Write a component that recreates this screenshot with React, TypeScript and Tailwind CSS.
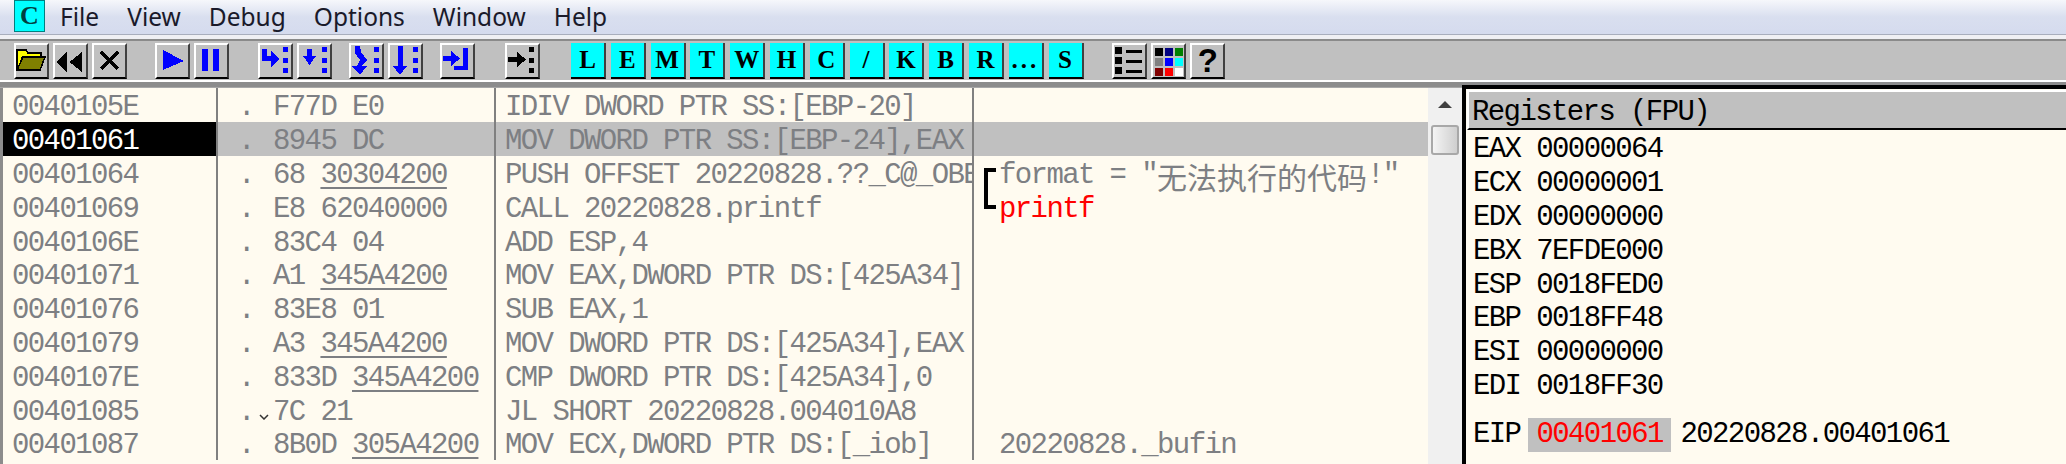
import React from "react";

const MONO = "font-['Liberation_Mono',monospace] text-[29px] tracking-[-1.6px] whitespace-pre leading-[24px]";

type Row = {
  addr: string;
  op: string;
  arg?: string;
  mark?: boolean;
  cmd: string;
  clipped?: boolean;
  comment?: React.ReactNode;
  active?: boolean;
};

const rows: Row[] = [
  { addr: "0040105E", op: "F77D E0", cmd: "IDIV DWORD PTR SS:[EBP-20]" },
  { addr: "00401061", op: "8945 DC", cmd: "MOV DWORD PTR SS:[EBP-24],EAX", active: true },
  {
    addr: "00401064",
    op: "68 ",
    arg: "30304200",
    cmd: "PUSH OFFSET 20220828.??_C@_OBE@",
    clipped: true,
    comment: (
      <>
        format = "
        <span className="font-['Noto_Sans_CJK_SC',sans-serif] text-[30px] tracking-normal">无法执行的代码</span>
        !"
      </>
    ),
  },
  {
    addr: "00401069",
    op: "E8 62040000",
    cmd: "CALL 20220828.printf",
    comment: <span className="text-[#ff0000]">printf</span>,
  },
  { addr: "0040106E", op: "83C4 04", cmd: "ADD ESP,4" },
  { addr: "00401071", op: "A1 ", arg: "345A4200", cmd: "MOV EAX,DWORD PTR DS:[425A34]" },
  { addr: "00401076", op: "83E8 01", cmd: "SUB EAX,1" },
  { addr: "00401079", op: "A3 ", arg: "345A4200", cmd: "MOV DWORD PTR DS:[425A34],EAX" },
  { addr: "0040107E", op: "833D ", arg: "345A4200", cmd: "CMP DWORD PTR DS:[425A34],0" },
  { addr: "00401085", op: "7C 21", mark: true, cmd: "JL SHORT 20220828.004010A8" },
  {
    addr: "00401087",
    op: "8B0D ",
    arg: "305A4200",
    cmd: "MOV ECX,DWORD PTR DS:[_iob]",
    comment: "20220828._bufin",
  },
];

const registers = [
  ["EAX", "00000064"],
  ["ECX", "00000001"],
  ["EDX", "00000000"],
  ["EBX", "7EFDE000"],
  ["ESP", "0018FED0"],
  ["EBP", "0018FF48"],
  ["ESI", "00000000"],
  ["EDI", "0018FF30"],
];

const BLUE = "#0000ff";

const Dots = ({ fill = BLUE, x = 24.5 }: { fill?: string; x?: number }) => (
  <>
    <rect x={x} y={4} width={5} height={5} fill={fill} />
    <rect x={x} y={14.5} width={5} height={5} fill={fill} />
    <rect x={x} y={25} width={5} height={5} fill={fill} />
  </>
);

const icons: Record<string, React.ReactNode> = {
  open: (
    <>
      <path d="M3 7h9l2 3h13v5H8L4 26H3z" fill="#ffff00" stroke="#000" strokeWidth="1.5" />
      <path d="M9 14h22l-5 13H3z" fill="#808000" stroke="#000" strokeWidth="1.5" />
    </>
  ),
  rewind: <path d="M3.5 19 14 9v20zM16.5 19 29 9v20z" fill="#000" />,
  close: <path d="M9 9 26 26M26 9 9 26" stroke="#000" strokeWidth="4" fill="none" />,
  play: <path d="M8 7 29 18 8 27z" fill={BLUE} />,
  pause: <path d="M8 6h6v22H8zM19 6h6v22h-6z" fill={BLUE} />,
  traceIn: (
    <>
      <path d="M4 6h5v7h4V8l8 8-8 8v-6H4z" fill={BLUE} />
      <Dots />
    </>
  ),
  stepIn: (
    <>
      <path d="M10 6h5v7h4l-6.500 9L6 13h4z" fill={BLUE} />
      <Dots />
    </>
  ),
  traceOver: (
    <>
      <path d="M6 3h5l1 6 6 8-5 6h5l-7 9-8-9h5l3-6-5-7z" fill={BLUE} />
      <Dots />
    </>
  ),
  stepOver: (
    <>
      <path d="M9.500 3h5v20H19l-7 9-7-9h4.500z" fill={BLUE} />
      <Dots />
    </>
  ),
  tillRet: (
    <path d="M3 13h8V8l9 7.500-9 7.500v-5H3zM23 5h5v22H14v-4h9z" fill={BLUE} />
  ),
  goTo: (
    <>
      <path d="M3 14h9V9l9 7.500-9 7.500v-5H3z" fill="#000" />
      <Dots fill="#000" x={23.5} />
    </>
  ),
  list: (
    <>
      <path d="M3 4h7v7H3zM3 14h7v7H3zM3 24h7v7H3z" fill="#000" />
      <path d="M14 6.500h16v3H14zM14 16.500h16v3H14zM14 26.500h16v3H14z" fill="#000" />
    </>
  ),
  colors: (
    <>
      {["#000000", "#000080", "#008000", "#808080", "#0000ff", "#00ffff", "#800000", "#ff0000", "#ffffff"].map(
        (c, i) => (
          <rect key={c} x={3.500 + (i % 3) * 10} y={4.500 + Math.floor(i / 3) * 10} width={8} height={8} fill={c} />
        )
      )}
    </>
  ),
};

const ToolButton = ({ icon, className = "" }: { icon: string; className?: string }) => (
  <div
    className={`w-[35px] h-[36px] shrink-0 bg-[#c0c0c0] border-t-2 border-l-2 border-t-white border-l-white border-b-2 border-r-2 border-b-black border-r-[#404040] ${className}`}
  >
    <svg viewBox="0 0 35 35" className="w-[35px] h-[35px] -ml-[2px] -mt-[2px]" shapeRendering="crispEdges">
      {icons[icon]}
    </svg>
  </div>
);

const LetterButton = ({ label, className = "" }: { label: string; className?: string }) => (
  <div
    className={`w-[35px] h-[36px] shrink-0 bg-[#00ffff] border-b-2 border-r-2 border-b-black border-r-[#404040] flex items-center justify-center font-['Liberation_Serif',serif] font-bold text-[25px] leading-none text-black ${label === "..." ? "tracking-[3px]" : ""} ${className}`}
  >
    {label}
  </div>
);

const menu = ["File", "View", "Debug", "Options", "Window", "Help"];
const letters = ["L", "E", "M", "T", "W", "H", "C", "/", "K", "B", "R", "...", "S"];

export default function App() {
  return (
    <div className="w-[2066px] h-[464px] overflow-hidden flex flex-col bg-[#c0c0c0]">
      {/* Menu bar */}
      <div className="h-[34px] shrink-0 flex items-center bg-gradient-to-b from-[#f6f7fb] via-[#d9dfef] to-[#d5dbee] pl-[14px]">
        <div className="w-[31px] h-[32px] -mt-[2px] bg-[#00ffff] border border-[#008080] flex items-center justify-center font-['Liberation_Serif',serif] font-bold text-[26px] leading-none text-[#004040]">
          C
        </div>
        <div className="flex gap-[28px] ml-[15px] font-['Noto_Sans',sans-serif] text-[24.5px] leading-none text-[#1a1a2a]">
          {menu.map((m) => (
            <span key={m}>{m}</span>
          ))}
        </div>
      </div>
      <div className="h-[5px] shrink-0 bg-[#f0f0f4] border-t border-[#a9aebd]" />

      {/* Toolbar */}
      <div className="h-[41px] shrink-0 flex items-center pl-[14px] gap-[4px] bg-[#c0c0c0] border-t-2 border-[#8a8a8a]">
        <ToolButton icon="open" />
        <ToolButton icon="rewind" />
        <ToolButton icon="close" />
        <ToolButton icon="play" className="ml-[24px]" />
        <ToolButton icon="pause" />
        <ToolButton icon="traceIn" className="ml-[25px]" />
        <ToolButton icon="stepIn" />
        <ToolButton icon="traceOver" className="ml-[13px]" />
        <ToolButton icon="stepOver" />
        <ToolButton icon="tillRet" className="ml-[13px]" />
        <ToolButton icon="goTo" className="ml-[26px]" />
        <div className="w-[23px] shrink-0" />
        {letters.map((l) => (
          <LetterButton key={l} label={l} className="mr-[0.800px]" />
        ))}
        <ToolButton icon="list" className="ml-[24px]" />
        <ToolButton icon="colors" />
        <div className="w-[35px] h-[36px] shrink-0 bg-[#c0c0c0] border-t-2 border-l-2 border-t-white border-l-white border-b-2 border-r-2 border-b-black border-r-[#404040] flex items-center justify-center font-['Liberation_Sans',sans-serif] font-bold text-[33px] leading-none text-black">
          ?
        </div>
      </div>
      <div className="h-[2px] shrink-0 bg-white" />
      <div className="h-[6px] shrink-0 bg-[#8c8c8c] border-b border-[#a8a8a8]" />

      {/* Panes */}
      <div className="flex-1 min-h-0 flex">
        {/* Disassembly */}
        <div className="w-[1428px] shrink-0 border-l-[3px] border-[#8c8c8c] bg-[#fffbf0] text-[#7d7f83]">
          {rows.map((r) => (
            <div
              key={r.addr}
              className={`h-[33.800px] grid grid-cols-[215px_278px_478px_454px] items-stretch ${MONO} ${r.active ? "bg-[#c0c0c0]" : ""}`}
            >
              <div className={`flex items-center pl-[9px] pt-[7px] border-r-2 border-[#808080] ${r.active ? "bg-black text-white" : ""}`}>
                {r.addr}
              </div>
              <div className="flex items-center pt-[7px] border-r-2 border-[#808080] relative">
                <span className="w-[55px] pl-[20px] shrink-0">.</span>
                {r.mark && (
                  <svg viewBox="0 0 10 6" className="absolute left-[41px] top-[22px] w-[10px] h-[6px]">
                    <path d="M1 1 5 5 9 1" stroke="#333" strokeWidth="1.500" fill="none" />
                  </svg>
                )}
                <span>
                  {r.op}
                  {r.arg && <span className="underline decoration-2 underline-offset-[4px]">{r.arg}</span>}
                </span>
              </div>
              <div className={`flex items-center pl-[9px] pt-[7px] border-r-2 border-[#808080] ${r.clipped ? "overflow-x-clip" : ""}`}>{r.cmd}</div>
              <div className="flex items-center pl-[25px] pt-[7px] relative">
                {r.addr === "00401064" && (
                  <div className="absolute left-[10px] top-[12px] bottom-0 w-[12px] border-l-[4px] border-t-[4px] border-black" />
                )}
                {r.addr === "00401069" && (
                  <div className="absolute left-[10px] top-0 h-[20px] w-[12px] border-l-[4px] border-b-[4px] border-black" />
                )}
                {r.comment}
              </div>
            </div>
          ))}
        </div>

        {/* Scrollbar */}
        <div className="w-[34px] shrink-0 bg-[#f0f0f0] flex flex-col items-center pt-[13px]">
          <svg viewBox="0 0 14 7" className="w-[14px] h-[7px]">
            <path d="M7 0 14 7H0z" fill="#404040" />
          </svg>
          <div className="w-[28px] h-[30px] mt-[17px] rounded-[3px] border-2 border-[#a8a8a8] bg-gradient-to-r from-[#f4f4f4] to-[#cfcfcf]" />
        </div>

        {/* Registers */}
        <div className="flex-1 -mt-[3px] border-l-4 border-t-4 border-black bg-[#fffbf0] text-black flex flex-col">
          <div className={`h-[40px] shrink-0 mt-[1px] ml-[1px] bg-[#c0c0c0] border-t-2 border-l-2 border-white border-b-2 border-b-black flex items-center pl-[3px] pt-[5px] ${MONO}`}>
            Registers (FPU)
          </div>
          <div className={`pl-[7px] pt-[3px] ${MONO}`}>
            {registers.map(([name, value]) => (
              <div key={name} className="h-[33.900px] flex items-center">
                {name} {value}
              </div>
            ))}
            <div className="h-[34px] mt-[14px] flex items-center">
              EIP
              <span className="ml-[8px] w-[143px] h-[34px] flex items-center pl-[8px] bg-[#c0c0c0] text-[#ff0000]">
                00401061
              </span>
              <span className="ml-[9px]">20220828.00401061</span>
            </div>
          </div>
        </div>
      </div>
    </div>
  );
}
